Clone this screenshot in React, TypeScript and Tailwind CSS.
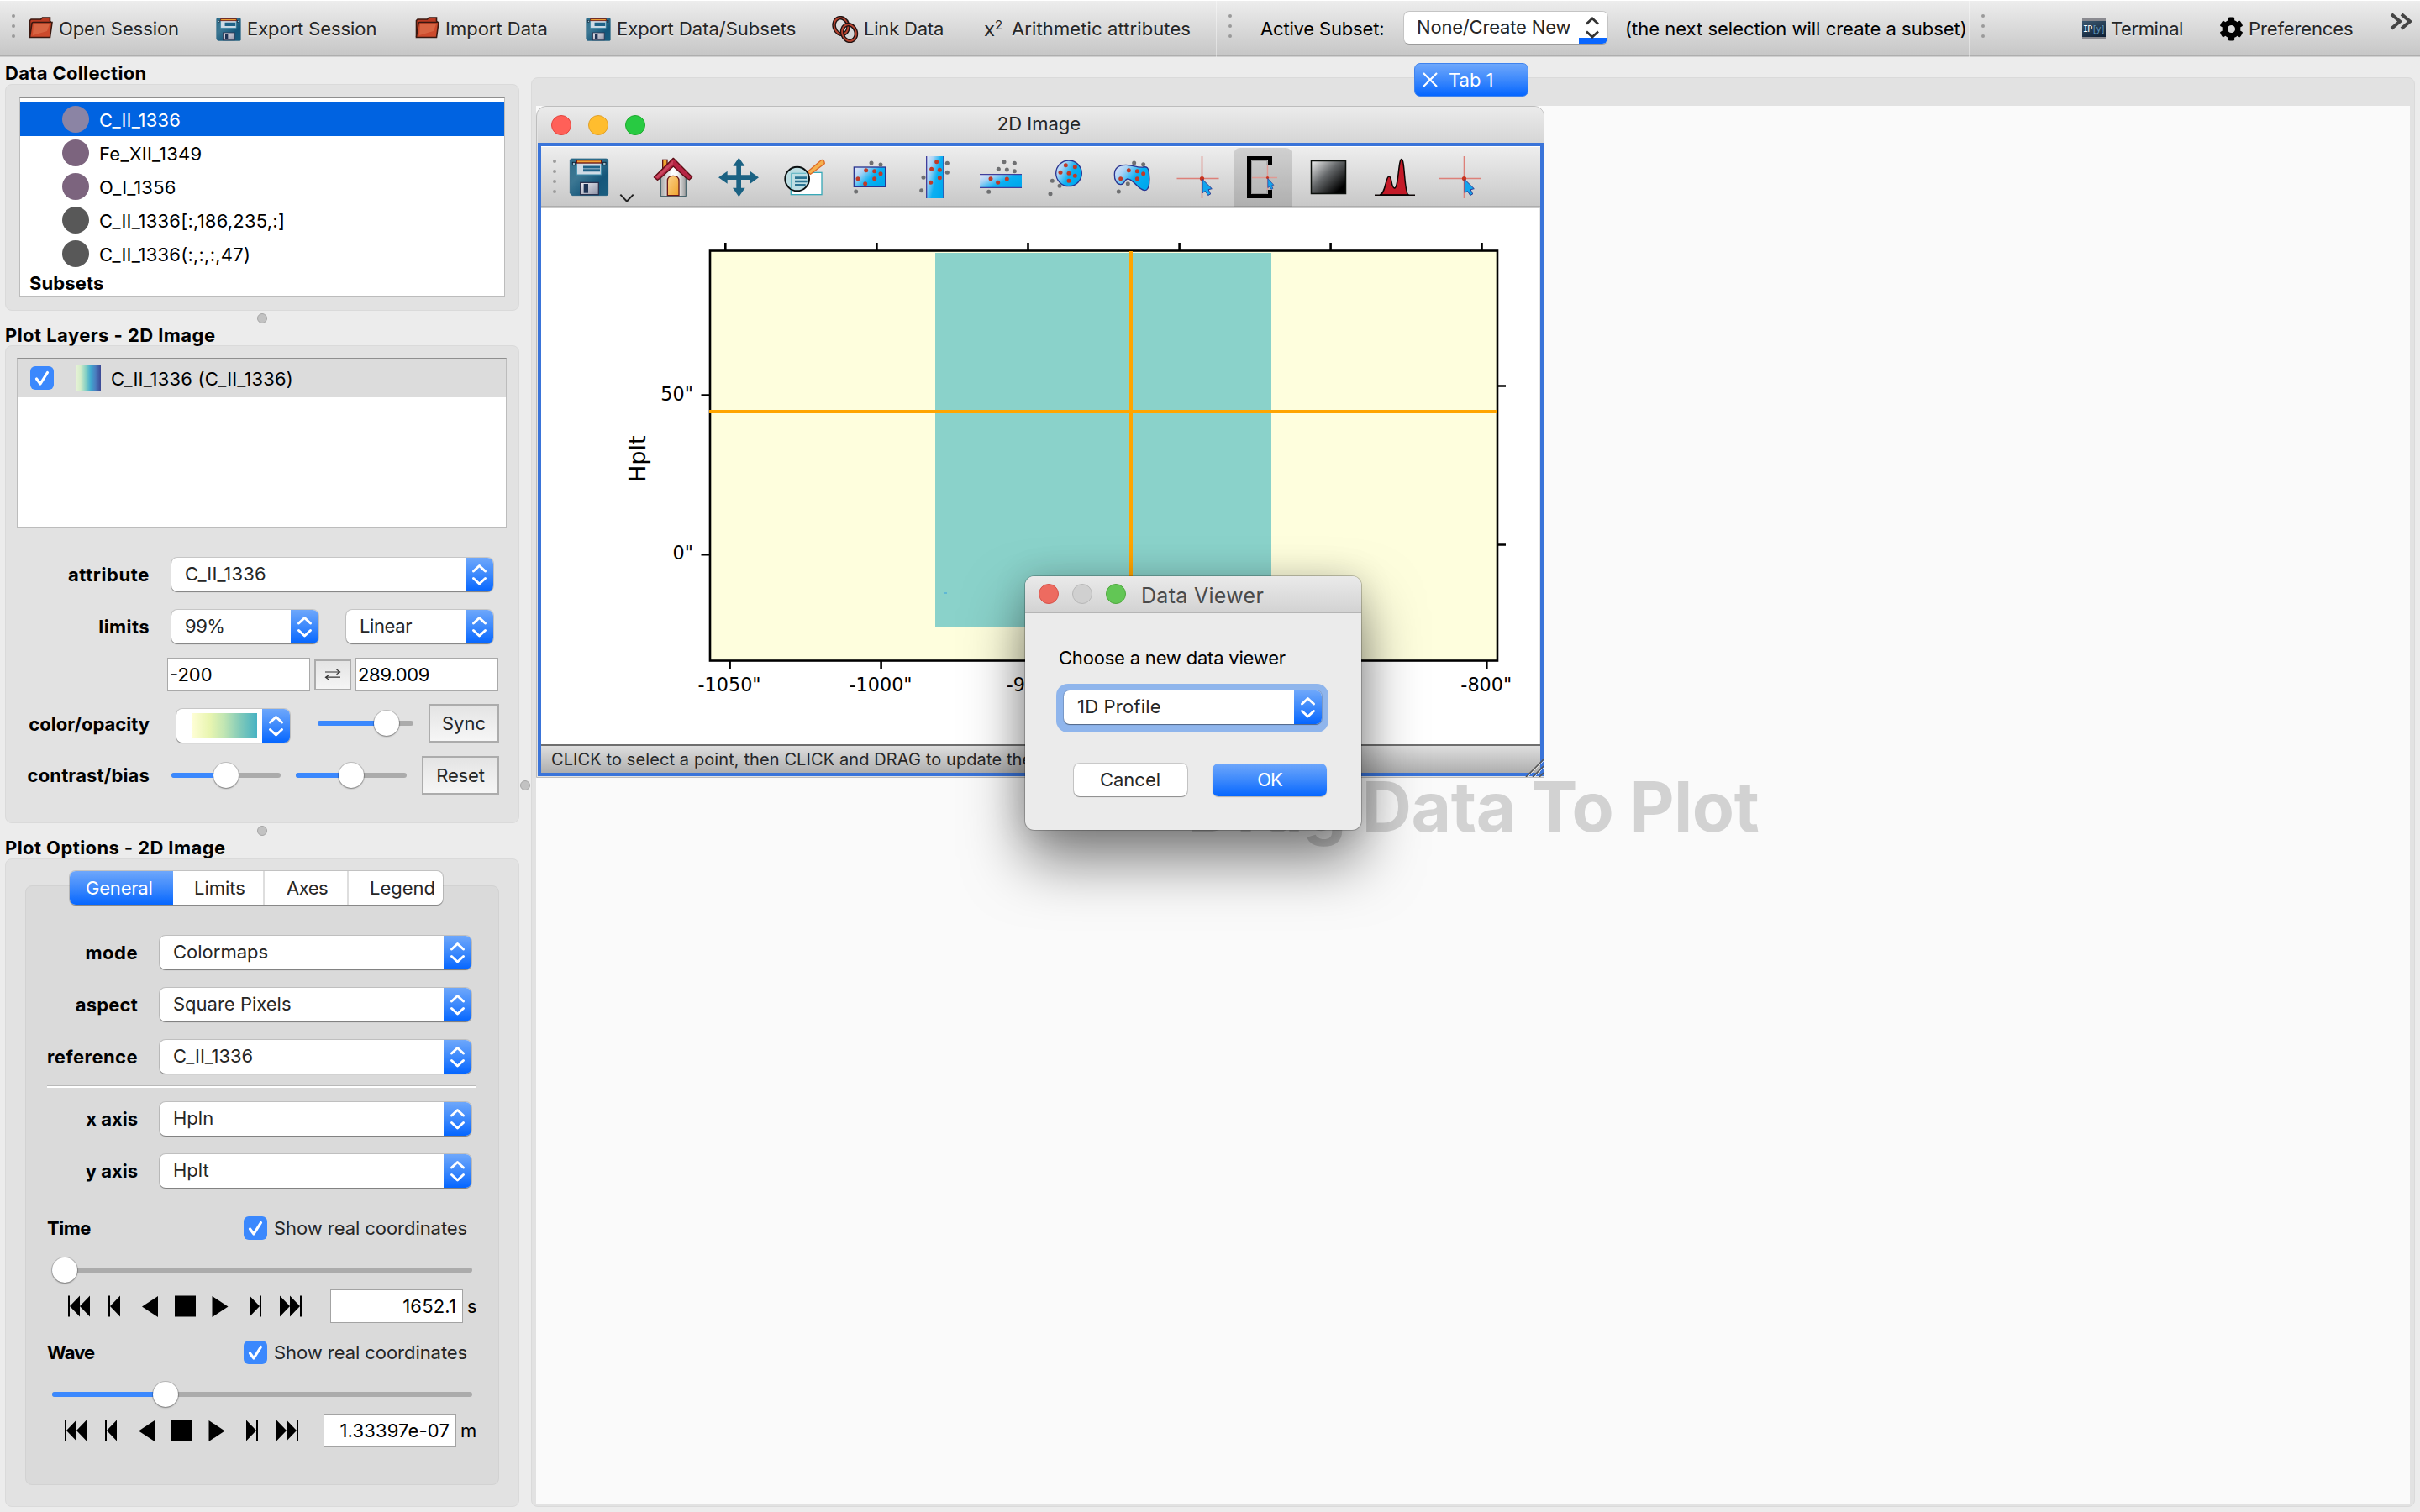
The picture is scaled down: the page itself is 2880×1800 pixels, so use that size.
import React from 'react';
import { FaCog } from 'react-icons/fa';

const FloppyShapes = ({ id }: { id: string }) => (
  <>
    <defs>
      <linearGradient id={id} x1="0" y1="0" x2="1" y2="1">
        <stop offset="0" stopColor="#2f6f8c" />
        <stop offset="0.35" stopColor="#3c7793" />
        <stop offset="0.7" stopColor="#14567a" />
        <stop offset="1" stopColor="#1b5f80" />
      </linearGradient>
      <linearGradient id={id + 'm'} x1="0" y1="0" x2="1" y2="1">
        <stop offset="0" stopColor="#e9e9f0" />
        <stop offset="1" stopColor="#8f93a6" />
      </linearGradient>
    </defs>
    <path d="M122 57H244Q251 57 251 64V182Q251 188 245 188H123L115 180V64Q115 57 122 57Z" fill={`url(#${id})`} stroke="#17587a" strokeWidth="2" />
    <rect x="124" y="70" width="10" height="10" fill="#9fc0d0" stroke="#0d2438" strokeWidth="3" />
    <rect x="233" y="70" width="10" height="10" fill="#9fc0d0" stroke="#0d2438" strokeWidth="3" />
    <rect x="139" y="71" width="87" height="43" fill="#cfdbe6" stroke="#3d8cab" strokeWidth="3" />
    <rect x="139" y="62" width="88" height="10" fill="#f0a438" stroke="#6e1414" strokeWidth="4" />
    <path d="M162 87H222M162 98H222" stroke="#1f6287" strokeWidth="9" />
    <rect x="152" y="142" width="65" height="43" fill={`url(#${id}m)`} stroke="#2b3350" strokeWidth="4" />
    <rect x="164" y="147" width="16" height="32" fill="#1e3354" />
  </>
);

const FloppyIcon = ({ id }: { id: string }) => (
  <svg viewBox="112 54 142 137" preserveAspectRatio="none" className="h-[28px] w-[30px] shrink-0">
    <FloppyShapes id={id} />
  </svg>
);

const FolderIcon = () => (
  <svg viewBox="0 0 29 26" className="h-[26px] w-[29px] shrink-0">
    <path d="M1.5 24V4.5L3 3H14.5L16.5 1H25.5V5L27 7" fill="#b83a22" stroke="#3a1810" strokeWidth="1.6" />
    <path d="M4 7.5Q4.2 6.5 5.500 6.500H28L25.500 24.500H1.500Z" fill="#cc4a2c" stroke="#3a1810" strokeWidth="1.6" />
    <path d="M6 9L25 8.500L22 17L5 22Z" fill="#e07a55" opacity="0.55" />
  </svg>
);

const LinkIcon = () => (
  <svg viewBox="0 0 32 32" className="h-[32px] w-[32px] shrink-0">
    <g fill="none">
      <ellipse cx="11" cy="12" rx="8.2" ry="10" transform="rotate(-18 11 12)" stroke="#1e1212" strokeWidth="4.6" />
      <ellipse cx="11" cy="12" rx="8.2" ry="10" transform="rotate(-18 11 12)" stroke="#b5432f" strokeWidth="1.9" />
      <ellipse cx="20.5" cy="20" rx="8.2" ry="10" transform="rotate(-18 20.5 20)" stroke="#1e1212" strokeWidth="4.6" />
      <ellipse cx="20.5" cy="20" rx="8.2" ry="10" transform="rotate(-18 20.5 20)" stroke="#b5432f" strokeWidth="1.9" />
    </g>
  </svg>
);

const Dots = ({ n, className }: { n: number; className: string }) => (
  <div className={'flex w-1 shrink-0 flex-col gap-2 ' + className}>
    {Array.from({ length: n }, (_, i) => (
      <div key={i} className="h-1 w-1 rounded-full bg-[#9a9a9a]" />
    ))}
  </div>
);

const ToolText = ({ children, className = '' }: { children: React.ReactNode; className?: string }) => (
  <span className={'whitespace-nowrap pb-[2px] text-[#262626] [text-shadow:0_2px_0_rgba(255,255,255,0.35)] ' + className}>{children}</span>
);

const TopBar = () => (
  <div className="flex h-[68px] shrink-0 items-center border-t border-white bg-[linear-gradient(#ededed,#c7c7c7_64px,#aeaeae_64px,#aeaeae_66px,#cfcfcf_66px)] text-[22px]">
    <Dots n={3} className="ml-[14px] -mt-[8px]" />
    <div className="ml-[16px] flex w-[223px] items-center gap-[7px]">
      <div className="-mt-[3px]"><FolderIcon /></div>
      <ToolText className="-tracking-[0.09px]">Open Session</ToolText>
    </div>
    <div className="flex w-[237px] items-center gap-[7px]">
      <FloppyIcon id="fd1" />
      <ToolText className="-tracking-[0.09px]">Export Session</ToolText>
    </div>
    <div className="flex w-[203px] items-center gap-[7px]">
      <div className="-mt-[3px]"><FolderIcon /></div>
      <ToolText>Import Data</ToolText>
    </div>
    <div className="flex w-[293px] items-center gap-[7px]">
      <FloppyIcon id="fd2" />
      <ToolText>Export Data/Subsets</ToolText>
    </div>
    <div className="flex w-[181px] items-center gap-[6px]">
      <LinkIcon />
      <ToolText className="-tracking-[0.2px]">Link Data</ToolText>
    </div>
    <div className="flex w-[276px] items-center">
      <span className="w-[33px] text-[24px] leading-none text-[#262626]">x<sup className="text-[15px]">2</sup></span>
      <ToolText className="tracking-[0.11px]">Arithmetic attributes</ToolText>
    </div>
    <div className="h-full w-px bg-white/40" />
    <Dots n={3} className="ml-[14px] -mt-[8px]" />
    <span className="ml-[34px] w-[170px] whitespace-nowrap pb-[2px] text-black -tracking-[0.17px]">Active Subset:</span>
    <div className="-mt-[4px] flex h-[40px] w-[244px] items-stretch overflow-hidden rounded-[7px] border border-[#c4c4c4] border-b-[#9b9b9b] bg-white">
      <span className="flex w-[210px] items-center whitespace-nowrap pb-px pl-[15px] text-[#262626] -tracking-[0.18px]">None/Create New</span>
      <div className="relative w-[34px] bg-[linear-gradient(#fff_31px,#0a66ff_31px)]">
        <svg viewBox="0 0 34 38" className="absolute inset-0 h-[38px] w-[34px]">
          <path d="M9 14.5L16 8L23 14.5M9 23.5L16 30L23 23.5" fill="none" stroke="#333" strokeWidth="2.8" />
        </svg>
      </div>
    </div>
    <span className="ml-[20px] w-[409px] whitespace-nowrap pb-[2px] text-black">(the next selection will create a subset)</span>
    <div className="h-full w-px bg-white/40" />
    <Dots n={3} className="ml-[14px] -mt-[8px]" />
    <div className="ml-[116px] flex w-[163px] items-center gap-[6px]">
      <div className="flex h-[25px] w-[28px] items-center justify-center border-y-[3px] border-[#8a8a90] bg-[linear-gradient(160deg,#3c5870,#0b1d33)]">
        <span className="whitespace-nowrap font-['DejaVu_Sans_Mono',monospace] text-[10px] leading-none text-white -tracking-[0.8px]">IP<span className="text-[#5f97bd]">[y]</span></span>
      </div>
      <ToolText className="-tracking-[0.4px]">Terminal</ToolText>
    </div>
    <div className="flex w-[203px] items-center gap-[6px]">
      <FaCog className="h-[29px] w-[29px] text-black" />
      <ToolText className="-tracking-[0.13px]">Preferences</ToolText>
    </div>
    <svg viewBox="0 0 28 20" className="-mt-[18px] h-[20px] w-[28px] shrink-0">
      <path d="M2 1L12 9.5L2 18M14 1L24 9.5L14 18" fill="none" stroke="#444" strokeWidth="4" />
    </svg>
  </div>
);

const Arrows = () => (
  <div className="flex w-[33px] shrink-0 items-center justify-center bg-[linear-gradient(#6ea7fb,#3d89fc_50%,#0566ff)]">
    <svg viewBox="0 0 33 40" className="h-[40px] w-[33px]">
      <path d="M9.5 16L16.5 9.5L23.5 16M9.5 24.5L16.5 31L23.5 24.5" fill="none" stroke="#fff" strokeWidth="3" strokeLinecap="round" strokeLinejoin="round" />
    </svg>
  </div>
);

const Select = ({ children, className = '' }: { children: React.ReactNode; className?: string }) => (
  <div className={'flex h-[40px] shrink-0 overflow-hidden rounded-[7px] bg-white shadow-[0_0_0_1px_rgba(0,0,0,0.12),0_1px_1px_rgba(0,0,0,0.35)] ' + className}>
    <div className="flex grow items-center whitespace-nowrap pb-[2px] pl-[16px] text-[#262626]">{children}</div>
    <Arrows />
  </div>
);

const Slider = ({ className, pos }: { className: string; pos: number }) => (
  <div className={'relative flex h-[30px] shrink-0 items-center ' + className}>
    <div className="h-[6px] w-full rounded-full bg-[#ababab]" />
    <div className="absolute left-0 h-[6px] rounded-full bg-[#3b88fd]" style={{ width: pos }} />
    <div className="absolute h-[30px] w-[30px] rounded-full bg-white shadow-[0_0_0_1px_rgba(0,0,0,0.15),0_1px_2px_rgba(0,0,0,0.35)]" style={{ left: pos - 15 }} />
  </div>
);

const Check = () => (
  <div className="h-[28px] w-[28px] shrink-0 rounded-[6px] bg-[#3b88fd]">
    <svg viewBox="0 0 28 28" className="h-[28px] w-[28px]">
      <path d="M7.5 15L12 21L20.5 7.5" fill="none" stroke="#fff" strokeWidth="3.2" strokeLinecap="round" strokeLinejoin="round" />
    </svg>
  </div>
);

const Handle = () => (
  <div className="flex h-[18px] justify-center pr-[8px]">
    <div className="mt-[3px] h-[12px] w-[12px] rounded-full border border-[#a6a6a6] bg-[#c2c2c2]" />
  </div>
);

const Label = ({ children, className = '' }: { children: React.ReactNode; className?: string }) => (
  <span className={'shrink-0 whitespace-nowrap text-right font-bold text-black ' + className}>{children}</span>
);

const collection: [string, string][] = [
  ['C_II_1336', 'bg-[#8b84a4]'],
  ['Fe_XII_1349', 'bg-[#7c647e]'],
  ['O_I_1356', 'bg-[#7c647e]'],
  ['C_II_1336[:,186,235,:]', 'bg-[#585858]'],
  ['C_II_1336(:,:,:,47)', 'bg-[#585858]'],
];

const DataCollection = () => (
  <>
    <div className="flex h-[32px] items-center pl-[6px] pt-[6px] font-bold tracking-[0.32px]">Data Collection</div>
    <div className="ml-[6px] h-[270px] w-[612px] rounded-[8px] border border-[#dadada] bg-[#e2e2e2] px-[16px] py-[15px]">
      <div className="h-[237px] overflow-hidden border border-[#bcbcbc] border-t-[#8f8f8f] bg-white pt-[5px]">
        {collection.map(([name, color], i) => (
          <div key={name} className={'flex h-[40px] items-center gap-[12px] pl-[50px] ' + (i === 0 ? 'bg-[#0063e1] text-white' : '')}>
            <div className={'h-[32px] w-[32px] rounded-full ' + color} />
            <span className="pt-[2px] tracking-[0.22px]">{name}</span>
          </div>
        ))}
        <div className="flex h-[30px] items-center pl-[11px] font-bold tracking-[0.12px]">Subsets</div>
      </div>
    </div>
  </>
);

const PlotLayers = () => (
  <>
    <div className="relative flex h-[23px] items-center pl-[6px] pb-px font-bold tracking-[0.44px]">Plot Layers - 2D Image</div>
    <div className="ml-[6px] h-[569px] w-[612px] rounded-[8px] border border-[#dadada] bg-[#e2e2e2] pt-[14px]">
      <div className="ml-[13px] h-[202px] w-[583px] border border-[#bcbcbc] border-t-[#8f8f8f] bg-white">
        <div className="flex h-[46px] items-center bg-[#dcdcdc] pl-[15px]">
          <Check />
          <div className="ml-[26px] h-[30px] w-[30px] bg-[linear-gradient(to_right,#e9f3d8,#d3ecc8_20%,#7fcdc4_42%,#3fa9cf_60%,#4a7fc0_78%,#3c4894)]" />
          <span className="ml-[12px] pt-[2px] tracking-[0.21px]">C_II_1336 (C_II_1336)</span>
        </div>
      </div>
      <div className="mt-[36px] flex h-[40px] items-center">
        <Label className="w-[171px] tracking-[0.6px]">attribute</Label>
        <Select className="ml-[26px] w-[383px]"><span className="tracking-[0.18px]">C_II_1336</span></Select>
      </div>
      <div className="mt-[22px] flex h-[40px] items-center">
        <Label className="w-[171px] tracking-[0.43px]">limits</Label>
        <Select className="ml-[26px] w-[175px]"><span className="-tracking-[0.5px]">99%</span></Select>
        <Select className="ml-[33px] w-[175px]"><span className="-tracking-[0.4px]">Linear</span></Select>
      </div>
      <div className="mt-[17px] flex h-[40px] items-center pl-[192px]">
        <div className="flex h-[40px] w-[170px] items-center border border-[#a9a9a9] bg-white pl-[2px]">-200</div>
        <div className="ml-[5px] flex h-[37px] w-[44px] items-center justify-center border-2 border-[#acacac] bg-[linear-gradient(#e4e4e4,#f5f5f5)]">
          <svg viewBox="0 0 20 14" className="h-[14px] w-[20px]">
            <path d="M1 4H18M14.5 1L18.5 4L14.5 6.8M19 10.2H2M5.5 7.5L1.5 10.2L5.5 13.2" fill="none" stroke="#333" strokeWidth="1.2" />
          </svg>
        </div>
        <div className="ml-[5px] flex h-[40px] w-[170px] items-center border border-[#a9a9a9] bg-white pl-[2px] -tracking-[0.3px]">289.009</div>
      </div>
      <div className="mt-[15px] flex h-[46px] items-center">
        <Label className="w-[171px] pt-[2px]">color/opacity</Label>
        <div className="ml-[32px] flex h-[40px] w-[135px] items-center self-end overflow-hidden rounded-[7px] bg-white shadow-[0_0_0_1px_rgba(0,0,0,0.12),0_1px_1px_rgba(0,0,0,0.35)]">
          <div className="ml-[18px] mr-[6px] h-[30px] w-[78px] shrink-0 bg-[linear-gradient(to_right,#fffed6,#e8f5b0_28%,#c0e5b3_50%,#7fc9b9_75%,#46b2c3)]" />
          <Arrows />
        </div>
        <Slider className="ml-[33px] w-[114px]" pos={82} />
        <div className="ml-[18px] flex h-[46px] w-[84px] items-center justify-center border-2 border-[#acacac] bg-[linear-gradient(#e4e4e4,#f6f6f6)] text-[#262626]">Sync</div>
      </div>
      <div className="mt-[16px] flex h-[46px] items-center">
        <Label className="w-[171px] tracking-[0.15px]">contrast/bias</Label>
        <Slider className="ml-[26px] w-[130px]" pos={65} />
        <Slider className="ml-[18px] w-[132px]" pos={66} />
        <div className="ml-[18px] flex h-[46px] w-[92px] items-center justify-center border-2 border-[#acacac] bg-[linear-gradient(#e4e4e4,#f6f6f6)] text-[#262626] -tracking-[0.2px]">Reset</div>
      </div>
    </div>
  </>
);

const Transport = () => (
  <svg viewBox="81 1540 278 28" className="h-[28px] w-[278px] shrink-0 fill-black">
    <path d="M81 1541.500h2v25h-2zM95 1541.500v25l-12-12.500zM107 1541.500v25l-12-12.500z" />
    <path d="M129 1541.500h2v25h-2zM143 1541.500v25l-12-12.500z" />
    <path d="M188 1542v25l-19-12.500z" />
    <path d="M208 1541.500h25v25h-25z" />
    <path d="M252.500 1542v25l19-12.500z" />
    <path d="M311 1541.500h-2v25h2zM297 1541.500v25l12-12.500z" />
    <path d="M359 1541.500h-2v25h2zM345 1541.500v25l12-12.500zM333 1541.500v25l12-12.500z" />
  </svg>
);

const AxisSlider = ({ name, value, unit, pos, rowPad, fieldGap, track }: { name: string; value: string; unit: string; pos: number; rowPad: string; fieldGap: string; track: string }) => (
  <>
    <div className="flex h-[28px] items-center pl-[25px]">
      <span className={'w-[234px] font-bold ' + track}>{name}</span>
      <Check />
      <span className="ml-[8px] whitespace-nowrap text-[#262626] -tracking-[0.06px]">Show real coordinates</span>
    </div>
    <div className="mt-[21px] pl-[31px]"><Slider className="w-[500px]" pos={pos} /></div>
    <div className={'mt-[8px] flex h-[40px] items-center ' + rowPad}>
      <div className="-mt-px"><Transport /></div>
      <div className={'flex h-[40px] w-[158px] items-center justify-end border border-[#a3a3a3] bg-white pr-[7px] tracking-[0.16px] ' + fieldGap}>{value}</div>
      <span className="ml-[5px]">{unit}</span>
    </div>
  </>
);

const OptionRow = ({ label, value, className, track }: { label: string; value: string; className: string; track: string }) => (
  <div className={'flex h-[40px] items-center ' + className}>
    <Label className={'w-[133px] ' + track}>{label}</Label>
    <Select className="ml-[26px] w-[371px]">{value}</Select>
  </div>
);

const PlotOptions = () => (
  <>
    <div className="relative flex h-[24px] items-center pl-[6px] pb-[2px] font-bold tracking-[0.41px]">Plot Options - 2D Image</div>
    <div className="ml-[6px] h-[772px] w-[612px] rounded-[8px] border border-[#dadada] bg-[#e2e2e2] pt-[31px]">
      <div className="ml-[23px] h-[714px] w-[564px] rounded-[8px] border border-[#d2d2d2] bg-[#dadada]">
        <div className="-mt-[18px] ml-[52px] flex h-[40px] w-[444px] overflow-hidden rounded-[7px] bg-white text-[#262626] shadow-[0_0_0_1px_rgba(0,0,0,0.14),0_1px_1px_rgba(0,0,0,0.3)]">
          <div className="flex w-[123px] items-center bg-[linear-gradient(#6ea7fb,#3d89fc_50%,#0566ff)] pl-[19px] text-white -tracking-[0.2px]">General</div>
          <div className="flex w-[109px] items-center border-r-2 border-[#dedede] pl-[25px]">Limits</div>
          <div className="flex w-[100px] items-center border-r-2 border-[#dedede] pl-[26px] -tracking-[0.5px]">Axes</div>
          <div className="flex w-[112px] items-center pl-[25px]">Legend</div>
        </div>
        <OptionRow className="mt-[37px]" label="mode" value="Colormaps" track="tracking-[0.5px]" />
        <OptionRow className="mt-[22px]" label="aspect" value="Square Pixels" track="tracking-[0.2px]" />
        <OptionRow className="mt-[22px]" label="reference" value="C_II_1336" track="tracking-[0.43px]" />
        <div className="ml-[25px] mt-[14px] h-[3px] w-[511px] border-t border-[#b9b9b9] bg-white" />
        <OptionRow className="mt-[17px]" label="x axis" value="Hpln" track="" />
        <OptionRow className="mt-[22px]" label="y axis" value="Hplt" track="" />
        <div className="h-[34px]" />
        <AxisSlider name="Time" value="1652.1" unit="s" pos={15} rowPad="pl-[50px]" fieldGap="ml-[34px]" track="-tracking-[0.5px]" />
        <div className="h-[21px]" />
        <AxisSlider name="Wave" value="1.33397e-07" unit="m" pos={135} rowPad="pl-[46px]" fieldGap="ml-[30px]" track="-tracking-[0.9px]" />
      </div>
    </div>
  </>
);

const Spots = ({ pts, fill, r = 7.5 }: { pts: number[][]; fill: string; r?: number }) => (
  <g fill={fill}>{pts.map(([x, y], i) => <circle key={i} cx={x} cy={y} r={r} />)}</g>
);

const Crosshair = ({ cx }: { cx: number }) => (
  <g>
    <path d={`M${cx - 30} 212.500h50M${cx} 186v50`} stroke="#dd8079" strokeWidth="1.6" fill="none" />
    <circle cx={cx} cy="212.500" r="2.600" fill="#c8341f" />
    <path d={`M${cx + 0.5} 213.500v16l3.500 -2l3.200 5l3 -1.600l-2.600 -5.200l4.200 -1z`} fill="#12a5ee" stroke="#2c3a92" strokeWidth="1" />
  </g>
);

const ViewerTools = () => (
  <div className="flex h-[74px] shrink-0 items-start border-t border-white bg-[linear-gradient(#eeeeee,#c8c8c8_70px,#acacac_70px,#acacac_72px,#cbcbcb_72px)] pt-[5px]">
    <svg viewBox="12 30 90 180" className="h-[60px] w-[30px] shrink-0">
      <Spots pts={[[60, 66], [60, 102], [60, 138], [60, 174]]} fill="#9c9c9c" r={6} />
    </svg>
    <svg viewBox="102 30 168 180" className="h-[60px] w-[56px] shrink-0"><FloppyShapes id="fd3" /></svg>
    <svg viewBox="270 30 90 180" className="h-[60px] w-[30px] shrink-0">
      <path d="M295 185L318 209L341 185" fill="none" stroke="#222" strokeWidth="6" />
    </svg>
    <svg viewBox="360 30 240 180" className="h-[60px] w-[80px] shrink-0">
      <defs>
        <linearGradient id="wall" x1="0" x2="1"><stop offset="0" stopColor="#aaa" /><stop offset="0.45" stopColor="#fff" /><stop offset="0.65" stopColor="#f6f6f6" /><stop offset="1" stopColor="#999" /></linearGradient>
        <linearGradient id="door" x1="0" x2="1" y2="1"><stop offset="0" stopColor="#fbd28a" /><stop offset="1" stopColor="#f0a32c" /></linearGradient>
      </defs>
      <rect x="446" y="61" width="16" height="34" fill="#f0a530" stroke="#5c1414" strokeWidth="4" />
      <path d="M439 122L484 76L529 122V191H439Z" fill="url(#wall)" stroke="#35565f" strokeWidth="3" />
      <path d="M463 188V136Q463 118 483 118Q504 118 504 136V188Z" fill="url(#door)" stroke="#6b1818" strokeWidth="4" />
      <path d="M484 55L551 122L541 132L530 126L484 84L438 126L427 133L415 123Z" fill="#b62443" stroke="#5c0f16" strokeWidth="4" strokeLinejoin="round" />
      <path d="M484 62L482 76L428 127L420 122Z" fill="#d0566a" opacity="0.7" />
    </svg>
    <svg viewBox="600 30 240 180" className="h-[60px] w-[80px] shrink-0">
      <path d="M718 53L739 83H726V115H758V101L789 124L758 146V132H726V161H740L718 193L696 161H709V132H677V146L645 124L677 101V115H709V83H697Z" fill="#1b6283" />
    </svg>
    <svg viewBox="840 30 210 180" className="h-[60px] w-[70px] shrink-0">
      <rect x="904" y="106" width="110" height="79" fill="#fff" stroke="#39a9b8" strokeWidth="4" />
      <path d="M962 104L1012 62Q1022 58 1024 74L974 112Z" fill="#f5b04e" stroke="#dd6a28" strokeWidth="4" strokeLinejoin="round" />
      <circle cx="926" cy="129" r="43" fill="#b9dce2" fillOpacity="0.92" stroke="#0a0f10" strokeWidth="6" />
      <path d="M905 165V109H958" stroke="#5cb4c2" strokeWidth="3" fill="none" />
      <path d="M918 125H960M918 138H962M918 151H956" stroke="#2a7391" strokeWidth="8" />
    </svg>
    <svg viewBox="-30 30 270 180" className="h-[60px] w-[90px] shrink-0">
      <defs>
        <linearGradient id="roi" x1="0" x2="1" y2="0.6"><stop offset="0" stopColor="#e9e6f7" /><stop offset="0.3" stopColor="#a8d3f5" /><stop offset="0.65" stopColor="#0bb0f2" /><stop offset="1" stopColor="#00a9ee" /></linearGradient>
      </defs>
      <rect x="49" y="87" width="112" height="70" fill="url(#roi)" stroke="#2a3590" strokeWidth="4" />
      <Spots pts={[[111, 72], [144, 78], [56, 174]]} fill="#6f7072" />
      <Spots pts={[[92, 98], [122, 101], [144, 110], [63, 128], [122, 128], [89, 146]]} fill="#bf3a28" />
    </svg>
    <svg viewBox="240 30 240 180" className="h-[60px] w-[80px] shrink-0">
      <rect x="308" y="48" width="61" height="150" fill="url(#roi)" />
      <path d="M308 48V198M369 48V198" stroke="#3f3f9c" strokeWidth="4" />
      <Spots pts={[[382, 73], [382, 106], [297, 124], [290, 170]]} fill="#6f7072" />
      <Spots pts={[[344, 68], [326, 94], [355, 97], [355, 125], [323, 142]]} fill="#bf3a28" />
    </svg>
    <svg viewBox="480 30 210 180" className="h-[60px] w-[70px] shrink-0">
      <rect x="498" y="113" width="150" height="47" fill="url(#roi)" />
      <path d="M498 113H648M498 160H648" stroke="#3f3f9c" strokeWidth="4" />
      <Spots pts={[[585, 68], [622, 73], [565, 94], [595, 96], [622, 101], [530, 175]]} fill="#6f7072" />
      <Spots pts={[[537, 128], [563, 142], [595, 129]]} fill="#bf3a28" />
    </svg>
    <svg viewBox="690 30 240 180" className="h-[60px] w-[80px] shrink-0">
      <circle cx="816" cy="109" r="46" fill="url(#roi)" stroke="#2a3590" strokeWidth="4" />
      <Spots pts={[[757, 136], [783, 154], [750, 182]]} fill="#6f7072" />
      <Spots pts={[[805, 80], [838, 86], [786, 106], [816, 109], [838, 118], [816, 136]]} fill="#bf3a28" />
    </svg>
    <svg viewBox="930 30 210 180" className="h-[60px] w-[70px] shrink-0">
      <path d="M979 113C979 92 992 79 1020 79C1045 79 1060 90 1080 87C1095 84 1101 90 1102 106C1105 130 1106 170 1087 170C1062 168 1044 126 1025 129C1012 132 1018 147 1002 149C988 150 978 132 979 113Z" fill="url(#roi)" stroke="#2a3590" strokeWidth="4" />
      <Spots pts={[[1049, 72], [1082, 77], [1027, 146], [994, 174]]} fill="#6f7072" />
      <Spots pts={[[1030, 98], [1060, 101], [1082, 110], [1001, 128], [1060, 128]]} fill="#bf3a28" />
    </svg>
    <svg viewBox="1380 180 88 60" className="h-[60px] w-[88px] shrink-0"><Crosshair cx={1430.5} /></svg>
    <div className="-mt-[4px] h-[70px] w-[70px] shrink-0 rounded-t-[8px] bg-black/12 pt-[4px]">
      <svg viewBox="1468 180 70 60" className="h-[60px] w-[70px]">
        <path d="M1514 196V186H1484V236H1514V226H1509V231H1489V191H1509V196Z" fill="#000" />
        <path d="M1489.500 191.500H1508V196M1489.500 191.500V230.500H1508V226" fill="none" stroke="#999" strokeWidth="1" />
        <path d="M1490 211.500h30M1508.500 196v30" stroke="#e09a94" strokeWidth="1.400" />
        <circle cx="1508.500" cy="211.500" r="1.600" fill="#c8341f" />
        <path d="M1508.800 212.500v11l2.300 -1.500l1.800 3.400l2 -1l-1.600 -3.500l2.600 -.6z" fill="#12a5ee" stroke="#2c3a92" strokeWidth="0.700" />
      </svg>
    </div>
    <svg viewBox="1538 180 82 60" className="h-[60px] w-[82px] shrink-0">
      <defs><linearGradient id="gray" x1="0" y1="0" x2="0.850" y2="0.850"><stop offset="0" stopColor="#f4f4f4" /><stop offset="0.5" stopColor="#65686a" /><stop offset="1" stopColor="#000" /></linearGradient></defs>
      <rect x="1560.500" y="191.500" width="41" height="39" fill="url(#gray)" stroke="#0b0f0b" strokeWidth="1.500" />
    </svg>
    <svg viewBox="1620 180 80 60" className="h-[60px] w-[80px] shrink-0">
      <path d="M1642 232C1649 231 1649 210 1653 210C1657 210 1655 223 1659.500 224C1664.500 224 1664 189.500 1668 189.500C1672 189.500 1671 229 1676 232Z" fill="#c41a28" stroke="#0c0505" strokeWidth="1.500" />
      <path d="M1636 232.300H1684" stroke="#0c0505" strokeWidth="1.500" />
    </svg>
    <svg viewBox="1700 180 90 60" className="h-[60px] w-[90px] shrink-0"><Crosshair cx={1742.5} /></svg>
  </div>
);

const topTicks = [863.3, 1043.4, 1223.5, 1403.6, 1583.6, 1763.5];
const bottomTicks = [868.6, 1048.6, 1228.7, 1408.9, 1589.1, 1769.3];
const xLabels = ['-1050"', '-1000"', '-950"', '-900"', '-850"', '-800"'];

const Plot = () => (
  <svg viewBox="644 248 1188 638" className="block h-[638px] w-[1188px] shrink-0 bg-white">
    <rect x="845" y="298.500" width="937" height="488" fill="#fefedd" />
    <rect x="1113" y="301" width="400" height="445.500" fill="#8ad2ca" />
    <rect x="1124" y="705" width="3" height="2" fill="#5fb8d6" />
    <rect x="845" y="298.500" width="937" height="488" fill="none" stroke="#000" strokeWidth="2.600" />
    <path d="M844 490H1782M1346 299V786" stroke="#ffa500" strokeWidth="4" />
    <g stroke="#000" strokeWidth="2.600">
      {topTicks.map((x) => <path key={x} d={`M${x} 289V298`} />)}
      {bottomTicks.map((x) => <path key={x} d={`M${x} 787V796`} />)}
      <path d="M834.500 470.500H844M834.500 660.300H844M1783 459.500H1792M1783 648.500H1792" />
    </g>
    <g fontFamily="DejaVu Sans, sans-serif" fontSize="22.300" fill="#000">
      {xLabels.map((t, i) => <text key={t} x={bottomTicks[i] - 0.5} y="823" textAnchor="middle">{t}</text>)}
      <text x="825" y="476.500" textAnchor="end">50"</text>
      <text x="825" y="665.500" textAnchor="end">0"</text>
      <text transform="translate(767.500 574) rotate(-90)" fontSize="27">Hplt</text>
    </g>
  </svg>
);

const ImageWindow = () => (
  <div className="absolute left-0 top-0 flex h-[800px] w-[1200px] flex-col rounded-t-[12px] border border-[#bdbdbd] bg-[#e4e4e4] pb-px pl-px">
    <div className="relative flex h-[43px] shrink-0 items-center justify-center rounded-t-[11px] bg-[linear-gradient(#ebebeb,#d6d6d6)] text-[#262626]">
      <div className="absolute left-[16px] flex gap-5">
        <div className="h-6 w-6 rounded-full border border-[#e2463f] bg-[#ff6058]" />
        <div className="h-6 w-6 rounded-full border border-[#e0a02b] bg-[#ffbd2e]" />
        <div className="h-6 w-6 rounded-full border border-[#1cab2d] bg-[#28ca42]" />
      </div>
      <span className="-ml-[4px] pb-[3px]">2D Image</span>
    </div>
    <div className="relative flex w-[1197px] grow flex-col border-4 border-[#3a74d9]">
      <ViewerTools />
      <Plot />
      <div className="flex h-[34px] shrink-0 items-center overflow-hidden whitespace-nowrap border-t-2 border-[#6f6f6f] bg-[linear-gradient(#dedede,#aeaeae)] pl-[12px] text-[20px] tracking-[0.1px] text-[#262626]">
        CLICK to select a point, then CLICK and DRAG to update the slice
      </div>
    </div>
    <svg viewBox="0 0 22 22" className="absolute bottom-0 right-0 h-[22px] w-[22px]">
      <path d="M1 22L22 1M9 22L22 9M17 22L22 17" stroke="#555" strokeWidth="1.500" />
      <path d="M3 22L22 3M11 22L22 11" stroke="#eee" strokeWidth="0.800" />
    </svg>
  </div>
);

const Dialog = () => (
  <div className="absolute left-[1220px] top-[686px] flex h-[302px] w-[400px] flex-col overflow-hidden rounded-[11px] bg-[#ebebeb] shadow-[0_0_0_1px_rgba(0,0,0,0.22),0_36px_70px_rgba(0,0,0,0.5),0_0px_40px_rgba(0,0,0,0.14)]">
    <div className="flex h-[44px] shrink-0 items-center border-b-2 border-[#b5b5b5] bg-[linear-gradient(#eaeaea,#d3d3d3)] pl-[16px]">
      <div className="flex gap-4">
        <div className="h-6 w-6 rounded-full border border-[#d5524a] bg-[#ed6b60]" />
        <div className="h-6 w-6 rounded-full border border-[#b8b8b8] bg-[#d0d0d0]" />
        <div className="h-6 w-6 rounded-full border border-[#4fa73e] bg-[#62c655]" />
      </div>
      <span className="ml-[18px] pt-[4px] text-[25px] tracking-[0.3px] text-[#4a4a4a]">Data Viewer</span>
    </div>
    <div className="mt-[37px] pl-[40px] leading-[32px] text-black -tracking-[0.2px]">Choose a new data viewer</div>
    <div className="ml-[37px] mt-[15px] h-[58px] w-[324px] shrink-0 rounded-[14px] bg-[#8fb5ec] pl-[9px] pt-[8px]">
      <Select className="w-[307px]"><span className="tracking-[0.2px]">1D Profile</span></Select>
    </div>
    <div className="mt-[37px] flex gap-[30px] pl-[58px]">
      <div className="flex h-[39px] w-[135px] items-center justify-center rounded-[7px] bg-white pb-px pr-px text-[#262626] shadow-[0_0_0_1px_rgba(0,0,0,0.14),0_1px_1px_rgba(0,0,0,0.3)]">Cancel</div>
      <div className="flex h-[39px] w-[136px] items-center justify-center rounded-[7px] bg-[linear-gradient(#6ea7fb,#3d89fc_50%,#0566ff)] pb-px text-white shadow-[0_1px_1px_rgba(0,0,0,0.25)] -tracking-[1px]">OK</div>
    </div>
  </div>
);

export default function App() {
  return (
    <div className="relative flex h-[1800px] w-[2880px] flex-col overflow-hidden bg-[#ececec] font-['Inter',sans-serif] text-[22px] leading-none text-black">
      <TopBar />
      <div className="flex grow">
        <div className="flex w-[632px] shrink-0 flex-col">
          <DataCollection />
          <Handle />
          <PlotLayers />
          <Handle />
          <PlotOptions />
        </div>
        <div className="relative mt-[24px] flex h-[1702px] w-[2242px] flex-col rounded-[8px] border border-[#dadada] bg-[#e2e2e2]">
          <div className="absolute -left-[14px] top-[836px] h-[12px] w-[12px] rounded-full border border-[#a6a6a6] bg-[#c2c2c2]" />
          <div className="flex h-[33px] shrink-0 justify-center">
            <div className="-mt-[18px] mr-[4px] flex h-[40px] w-[136px] items-center rounded-[7px] border border-[#3f83ee] bg-[linear-gradient(#6ea7fb,#3d89fc_50%,#0566ff)] pl-[9px] text-white">
              <svg viewBox="0 0 18 18" className="h-[18px] w-[18px]"><path d="M1 1L17 17M17 1L1 17" stroke="#fff" strokeWidth="2.200" /></svg>
              <span className="ml-[13px]">Tab 1</span>
            </div>
          </div>
          <div className="relative ml-[5px] flex h-[1664px] w-[2230px] items-center justify-center bg-[#fafafa]">
            <span className="whitespace-nowrap pt-[6px] text-[82px] font-bold leading-none text-[#d2d2d2] -tracking-[0.46px]">Drag Data To Plot</span>
            <ImageWindow />
          </div>
        </div>
      </div>
      <Dialog />
    </div>
  );
}
